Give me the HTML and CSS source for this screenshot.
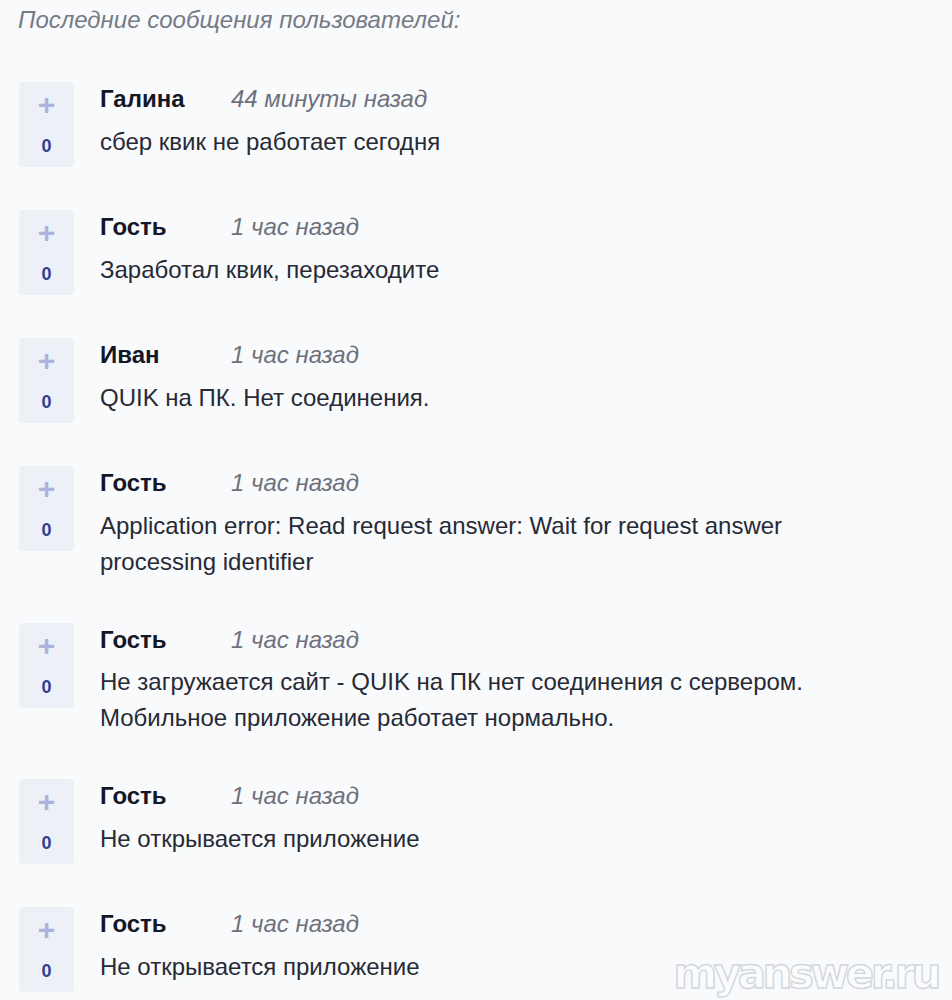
FILE: index.html
```html
<!DOCTYPE html>
<html lang="ru">
<head>
<meta charset="utf-8">
<link rel="stylesheet" href="styles.css">
</head>
<body>
<div class="page">
  <div class="title">Последние сообщения пользователей:</div>
  <div class="list">
    <div class="item">
      <div class="vote"><span class="plus">+</span><span class="count">0</span></div>
      <div class="body">
        <div class="head"><span class="name">Галина</span><span class="time">44 минуты назад</span></div>
        <div class="msg">сбер квик не работает сегодня</div>
      </div>
    </div>
    <div class="item">
      <div class="vote"><span class="plus">+</span><span class="count">0</span></div>
      <div class="body">
        <div class="head"><span class="name">Гость</span><span class="time">1 час назад</span></div>
        <div class="msg">Заработал квик, перезаходите</div>
      </div>
    </div>
    <div class="item">
      <div class="vote"><span class="plus">+</span><span class="count">0</span></div>
      <div class="body">
        <div class="head"><span class="name">Иван</span><span class="time">1 час назад</span></div>
        <div class="msg">QUIK на ПК. Нет соединения.</div>
      </div>
    </div>
    <div class="item">
      <div class="vote"><span class="plus">+</span><span class="count">0</span></div>
      <div class="body">
        <div class="head"><span class="name">Гость</span><span class="time">1 час назад</span></div>
        <div class="msg">Application error: Read request answer: Wait for request answer processing identifier</div>
      </div>
    </div>
    <div class="item">
      <div class="vote"><span class="plus">+</span><span class="count">0</span></div>
      <div class="body">
        <div class="head"><span class="name">Гость</span><span class="time">1 час назад</span></div>
        <div class="msg">Не загружается сайт - QUIK на ПК нет соединения с сервером. Мобильное приложение работает нормально.</div>
      </div>
    </div>
    <div class="item">
      <div class="vote"><span class="plus">+</span><span class="count">0</span></div>
      <div class="body">
        <div class="head"><span class="name">Гость</span><span class="time">1 час назад</span></div>
        <div class="msg">Не открывается приложение</div>
      </div>
    </div>
    <div class="item">
      <div class="vote"><span class="plus">+</span><span class="count">0</span></div>
      <div class="body">
        <div class="head"><span class="name">Гость</span><span class="time">1 час назад</span></div>
        <div class="msg">Не открывается приложение</div>
      </div>
    </div>
  </div>
  <div class="watermark">myanswer.ru</div>
</div>
</body>
</html>
```

FILE: styles.css
```css
html, body {
  margin: 0;
  padding: 0;
  background: #f9fafc;
}
body {
  font-family: "Liberation Sans", Arial, sans-serif;
  color: #22242f;
}
.page {
  position: relative;
  width: 952px;
  height: 1000px;
  overflow: hidden;
  padding: 5px 0 0 18px;
  box-sizing: border-box;
}
.title {
  font-style: italic;
  font-size: 24px;
  line-height: 30px;
  color: #767a86;
}
.list {
  display: flex;
  flex-direction: column;
  gap: 43px;
  margin-top: 47px;
}
.item {
  display: flex;
  align-items: flex-start;
}
.vote {
  width: 55px;
  height: 85px;
  margin-left: 1px;
  background: #eef0f8;
  border-radius: 4px;
  display: flex;
  flex-direction: column;
  align-items: center;
  flex-shrink: 0;
}
.plus {
  font-size: 30px;
  line-height: 30px;
  font-weight: bold;
  color: #a9b4de;
  margin-top: 8px;
}
.count {
  font-size: 18px;
  line-height: 24px;
  font-weight: bold;
  color: #343d91;
  margin-top: 14px;
}
.body {
  margin-left: 26px;
  width: 740px;
}
.head {
  display: flex;
  align-items: baseline;
  font-size: 24px;
  line-height: 34px;
}
.name {
  font-weight: bold;
  color: #141726;
  width: 131px;
}
.time {
  font-style: italic;
  color: #6e717c;
}
.msg {
  font-size: 24px;
  line-height: 36px;
  margin-top: 7.5px;
  color: #272a35;
}
.watermark {
  position: absolute;
  right: 14px;
  bottom: 2px;
  font-family: "DejaVu Sans", sans-serif;
  font-weight: bold;
  font-size: 42px;
  letter-spacing: -3.5px;
  color: #fbfcfd;
  -webkit-text-stroke: 1.4px #d3d6dc;
}
```
